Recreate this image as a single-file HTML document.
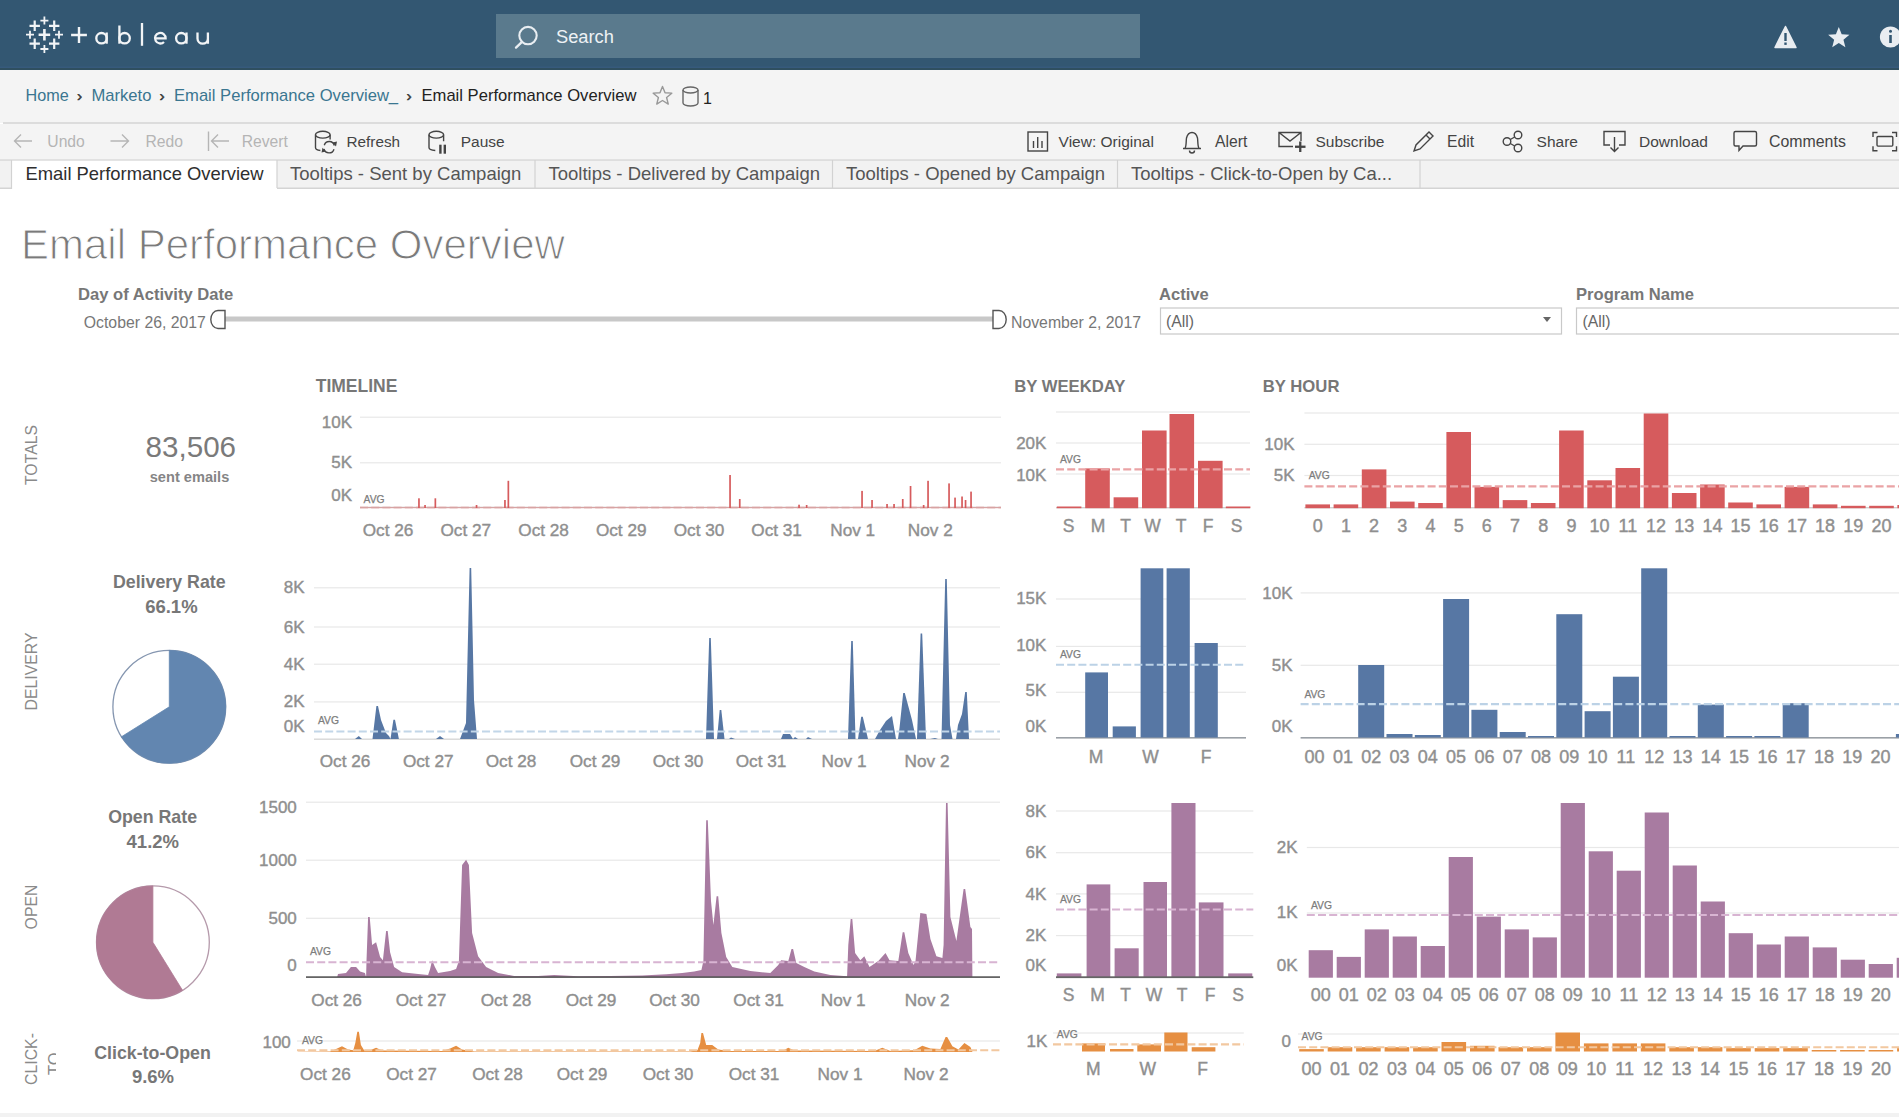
<!DOCTYPE html>
<html><head><meta charset="utf-8"><title>Email Performance Overview</title>
<style>
html,body{margin:0;padding:0;background:#fff;overflow:hidden;}
svg{display:block;font-family:"Liberation Sans", sans-serif;}
</style></head><body>
<svg width="1899" height="1117" viewBox="0 0 1899 1117">
<rect x="0" y="0" width="1899" height="1117" fill="#fff"/>
<rect x="0" y="0" width="1899" height="71" fill="#335772"/><rect x="0" y="66.5" width="1899" height="1.5" fill="#375a7c"/><rect x="0" y="68" width="1899" height="3" fill="#2f4f60"/>
<rect x="496" y="14" width="644" height="44" fill="#5a7a8d"/>
<circle cx="528" cy="35.6" r="8.7" fill="none" stroke="#e9eef2" stroke-width="2.1"/>
<line x1="522" y1="41.8" x2="516" y2="47.6" stroke="#e9eef2" stroke-width="2.3" stroke-linecap="round"/>
<text x="556.0" y="43.0" font-size="18.3" fill="#eef2f5" font-weight="400" text-anchor="start" >Search</text>
<path d="M38.6 34.7H50.2M44.4 28.9V40.5" stroke="#f2f4f6" stroke-width="2.6" fill="none"/>
<path d="M40.4 20.6H48.4M44.4 16.6V24.6" stroke="#f2f4f6" stroke-width="1.8" fill="none"/>
<path d="M26.0 34.7H34.0M30.0 30.7V38.7" stroke="#f2f4f6" stroke-width="1.8" fill="none"/>
<path d="M55.0 34.7H63.0M59.0 30.7V38.7" stroke="#f2f4f6" stroke-width="1.8" fill="none"/>
<path d="M40.4 49.0H48.4M44.4 45.0V53.0" stroke="#f2f4f6" stroke-width="1.8" fill="none"/>
<path d="M29.5 25.8H39.9M34.7 20.6V31.0" stroke="#f2f4f6" stroke-width="2.2" fill="none"/>
<path d="M49.0 25.8H59.4M54.2 20.6V31.0" stroke="#f2f4f6" stroke-width="2.2" fill="none"/>
<path d="M29.5 43.7H39.9M34.7 38.5V48.9" stroke="#f2f4f6" stroke-width="2.2" fill="none"/>
<path d="M49.0 43.7H59.4M54.2 38.5V48.9" stroke="#f2f4f6" stroke-width="2.2" fill="none"/>
<path d="M71.1 35.0H86.9M79.0 27.1V42.9" stroke="#f2f4f6" stroke-width="2.4" fill="none"/>
<g fill="none" stroke="#f2f4f6" stroke-width="2.3"><circle cx="101.5" cy="38.2" r="5.2"/><line x1="106.7" y1="32.5" x2="106.7" y2="43.7"/><circle cx="124.6" cy="38.2" r="5.2"/><line x1="119.4" y1="25.5" x2="119.4" y2="43.7"/><line x1="142" y1="23" x2="142" y2="45.8"/><path d="M155.2 38.4H165.6A5.3 5.3 0 1 0 164.0 42.0"/><circle cx="181.3" cy="38.2" r="5.2"/><line x1="186.5" y1="32.5" x2="186.5" y2="43.7"/><path d="M197.5 32.5V38.5A5.2 5.2 0 0 0 207.9 38.5V32.5M207.9 32.5V43.7"/></g>
<path d="M1785.5 26.5L1796 47.5H1775Z" fill="#e9edf1" stroke="#e9edf1" stroke-width="1.5" stroke-linejoin="round"/>
<rect x="1784.3" y="33" width="2.4" height="8" fill="#335772"/><rect x="1784.3" y="42.5" width="2.4" height="2.4" fill="#335772"/>
<polygon points="1838.80,27.00 1835.92,34.24 1828.15,34.74 1834.14,39.71 1832.22,47.26 1838.80,43.10 1845.38,47.26 1843.46,39.71 1849.45,34.74 1841.68,34.24" fill="#e9edf1"/>
<circle cx="1890.5" cy="37" r="10.6" fill="#e9edf1"/>
<rect x="1889.2" y="35" width="2.6" height="8" fill="#335772"/><circle cx="1890.5" cy="31.3" r="1.5" fill="#335772"/>
<rect x="0" y="70" width="1899" height="53" fill="#f4f4f4"/>
<text y="101" font-size="16.2" fill="#3a7690"><tspan x="25.5">Home</tspan><tspan x="91.5" font-size="16.6">Marketo</tspan><tspan x="174" font-size="16.6">Email Performance Overview_</tspan></text>
<text y="100.5" font-size="15.5" fill="#333" stroke="#333" stroke-width="0.5"><tspan x="77">›</tspan><tspan x="159.5">›</tspan><tspan x="406.5">›</tspan></text>
<text x="421.5" y="101.0" font-size="16.6" fill="#222" font-weight="400" text-anchor="start" >Email Performance Overview</text>
<polygon points="662.50,86.40 659.97,92.72 653.18,93.17 658.41,97.53 656.74,104.13 662.50,100.50 668.26,104.13 666.59,97.53 671.82,93.17 665.03,92.72" fill="none" stroke="#999" stroke-width="1.4" stroke-linejoin="round"/>
<g fill="none" stroke="#666" stroke-width="1.4"><ellipse cx="690.5" cy="90" rx="7.5" ry="3"/><path d="M683 90V103A7.5 3 0 0 0 698 103V90"/></g>
<text x="703.0" y="104.0" font-size="16" fill="#222" font-weight="400" text-anchor="start" >1</text>
<rect x="3" y="122" width="1896" height="2" fill="#dcdcdc"/>
<rect x="0" y="124" width="1899" height="36" fill="#f4f4f4"/>
<text x="47.3" y="146.6" font-size="15.7" fill="#b5b5b5" font-weight="400" text-anchor="start" >Undo</text>
<text x="145.4" y="146.6" font-size="15.7" fill="#b5b5b5" font-weight="400" text-anchor="start" >Redo</text>
<text x="241.7" y="146.6" font-size="15.7" fill="#b5b5b5" font-weight="400" text-anchor="start" >Revert</text>
<text x="346.5" y="146.6" font-size="15.3" fill="#444" font-weight="400" text-anchor="start" >Refresh</text>
<text x="460.7" y="146.6" font-size="15.5" fill="#444" font-weight="400" text-anchor="start" >Pause</text>
<text x="1058.6" y="146.6" font-size="15.5" fill="#444" font-weight="400" text-anchor="start" >View: Original</text>
<text x="1215.0" y="146.6" font-size="15.7" fill="#444" font-weight="400" text-anchor="start" >Alert</text>
<text x="1315.5" y="146.6" font-size="15.5" fill="#444" font-weight="400" text-anchor="start" >Subscribe</text>
<text x="1447.0" y="146.6" font-size="15.7" fill="#444" font-weight="400" text-anchor="start" >Edit</text>
<text x="1536.6" y="146.6" font-size="15.5" fill="#444" font-weight="400" text-anchor="start" >Share</text>
<text x="1639.0" y="146.6" font-size="15.5" fill="#444" font-weight="400" text-anchor="start" >Download</text>
<text x="1769.0" y="146.6" font-size="15.9" fill="#444" font-weight="400" text-anchor="start" >Comments</text>
<g fill="none" stroke="#b5b5b5" stroke-width="1.4"><path d="M32 141H14.5M21 134.5L14.5 141L21 147.5"/><path d="M110.5 141H128.5M122 134.5L128.5 141L122 147.5"/><path d="M208.5 131.5V151M229 141H211.5M218 134.5L211.5 141L218 147.5"/></g>
<g fill="none" stroke="#444" stroke-width="1.4"><ellipse cx="322.8" cy="134.7" rx="7.3" ry="3.4"/><path d="M315.5 134.7V147.5C315.5 149.3 317.5 150.3 320.4 150.5M330.1 134.7V139.6"/><path d="M324.3 145.2A5.2 5.2 0 0 1 334.3 145.5M334 149.2A5.2 5.2 0 0 1 324 149"/><ellipse cx="436.3" cy="134.7" rx="7.3" ry="3.4"/><path d="M429 134.7V147.5C429 149.3 431.5 150.3 435.3 150.5M443.6 134.7V141.2"/><rect x="1028" y="132" width="19.5" height="19" /><path d="M1033.5 141V148M1037.7 137V148M1042 141V148"/><path d="M1183 148.5H1201M1185 148.5C1186.5 146 1186 141 1186.5 138C1187.5 134 1190 132.5 1192 132.5C1194 132.5 1196.5 134 1197.5 138C1198 141 1197.5 146 1199 148.5M1189.5 150.5A2.5 2.5 0 0 0 1194.5 150.5"/><path d="M1301 141V132.5H1279V146.5H1293M1279 132.5L1290 141L1301 132.5"/><path d="M1414 151L1416 145L1429 132L1433 136L1420 149Z M1426 135L1430 139"/><circle cx="1507" cy="141.5" r="3.8"/><circle cx="1518" cy="135" r="3.8"/><circle cx="1518" cy="148" r="3.8"/><path d="M1510.3 139.5L1514.7 137M1510.3 143.5L1514.7 146"/><path d="M1610 145H1604V131.5H1625V145H1619M1614.5 137V151.5M1610.5 147.5L1614.5 151.5L1618.5 147.5"/><path d="M1735.5 131.5H1755A1.5 1.5 0 0 1 1756.5 133V144.5A1.5 1.5 0 0 1 1755 146H1743L1739 150.5V146H1735.5A1.5 1.5 0 0 1 1734 144.5V133A1.5 1.5 0 0 1 1735.5 131.5Z"/><path d="M1873 137V132.5H1877.5M1877.5 150.8H1873V146.3M1896.5 137V132.5H1892M1892 150.8H1896.5V146.3" /><rect x="1877" y="136.5" width="15.8" height="9.6" rx="1"/></g>
<rect x="1295" y="145.6" width="10.5" height="2.3" fill="#444"/><rect x="1299.1" y="141.5" width="2.3" height="10.5" fill="#444"/>
<rect x="439.2" y="144.7" width="2.4" height="9" fill="#444"/><rect x="443.6" y="144.7" width="2.4" height="9" fill="#444"/>
<path d="M332.5 142.5L336 146.5L337 141.5Z M326 151.5L322.5 147.8L321.5 152.5Z" fill="#444"/>
<rect x="0" y="160" width="1899" height="28" fill="#f2f2f2"/>
<rect x="0" y="159.3" width="1899" height="1.5" fill="#d9d9d9"/>
<rect x="0" y="187.5" width="1899" height="1.5" fill="#d4d4d4"/>
<rect x="11.5" y="160.8" width="265.5" height="28.2" fill="#ffffff"/>
<path d="M11.5 160V189M277 160V188M535 160V188M832.5 160V188M1117.5 160V188M1420 160V188" stroke="#d2d2d2" stroke-width="1.2"/>
<text x="25.5" y="179.6" font-size="18.4" fill="#2e2e2e" font-weight="400" text-anchor="start" >Email Performance Overview</text>
<text x="290.0" y="179.6" font-size="18.5" fill="#555" font-weight="400" text-anchor="start" >Tooltips - Sent by Campaign</text>
<text x="548.5" y="179.6" font-size="18.5" fill="#555" font-weight="400" text-anchor="start" >Tooltips - Delivered by Campaign</text>
<text x="846.0" y="179.6" font-size="18.5" fill="#555" font-weight="400" text-anchor="start" >Tooltips - Opened by Campaign</text>
<text x="1131.0" y="179.6" font-size="18.5" fill="#555" font-weight="400" text-anchor="start" >Tooltips - Click-to-Open by Ca...</text>
<text x="21.0" y="258.5" font-size="42" fill="#7a7a7a" font-weight="400" text-anchor="start" stroke="#fff" stroke-width="1.05">Email Performance Overview</text>
<text x="78.0" y="300.3" font-size="16.6" fill="#777" font-weight="700" text-anchor="start" >Day of Activity Date</text>
<text x="83.8" y="327.7" font-size="15.8" fill="#777" font-weight="400" text-anchor="start" >October 26, 2017</text>
<rect x="225" y="316.5" width="770" height="5" fill="#c8c8c8"/>
<path d="M225 310.5H218A7.2 9 0 0 0 218 328.5H225Z" fill="#fff" stroke="#555" stroke-width="1.4"/>
<path d="M993 310.5H999A7.2 9 0 0 1 999 328.5H993Z" fill="#fff" stroke="#555" stroke-width="1.4"/>
<text x="1011.0" y="327.7" font-size="15.8" fill="#777" font-weight="400" text-anchor="start" >November 2, 2017</text>
<text x="1159.0" y="300.3" font-size="16.6" fill="#777" font-weight="700" text-anchor="start" >Active</text>
<rect x="1160.5" y="308" width="401" height="26" fill="#fff" stroke="#c9c9c9" stroke-width="1.2"/>
<text x="1166.0" y="327.0" font-size="15.8" fill="#666" font-weight="400" text-anchor="start" >(All)</text>
<path d="M1543 317H1551L1547 322Z" fill="#666"/>
<text x="1576.0" y="300.3" font-size="16.6" fill="#777" font-weight="700" text-anchor="start" >Program Name</text>
<rect x="1576.5" y="308" width="340" height="26" fill="#fff" stroke="#c9c9c9" stroke-width="1.2"/>
<text x="1582.5" y="327.0" font-size="15.8" fill="#666" font-weight="400" text-anchor="start" >(All)</text>
<text x="315.7" y="392.0" font-size="17.5" fill="#777" font-weight="700" text-anchor="start" >TIMELINE</text>
<text x="1014.2" y="392.0" font-size="16.7" fill="#777" font-weight="700" text-anchor="start" >BY WEEKDAY</text>
<text x="1262.8" y="392.0" font-size="16.7" fill="#777" font-weight="700" text-anchor="start" >BY HOUR</text>
<text x="0" y="0" font-size="15.8" fill="#8a8a8a" text-anchor="middle" transform="translate(37.2 455.0) rotate(-90)">TOTALS</text>
<text x="0" y="0" font-size="15.8" fill="#8a8a8a" text-anchor="middle" transform="translate(37.2 671.5) rotate(-90)">DELIVERY</text>
<text x="0" y="0" font-size="15.8" fill="#8a8a8a" text-anchor="middle" transform="translate(37.2 907.0) rotate(-90)">OPEN</text>
<text x="0" y="0" font-size="15.8" fill="#8a8a8a" text-anchor="middle" transform="translate(37.2 1059.0) rotate(-90)">CLICK-</text>
<clipPath id="cto"><rect x="40" y="1040" width="16" height="50"/></clipPath>
<g clip-path="url(#cto)"><text x="0" y="0" font-size="16.5" fill="#888" transform="translate(60.3 1075) rotate(-90)">TO</text></g>
<text x="190.8" y="457.4" font-size="29.6" fill="#7a7a7a" font-weight="400" text-anchor="middle" >83,506</text>
<text x="189.5" y="482.4" font-size="14.6" fill="#858585" font-weight="700" text-anchor="middle" >sent emails</text>
<rect x="360.0" y="416.6" width="641.0" height="1.2" fill="#e8e8e8"/>
<rect x="360.0" y="462.2" width="641.0" height="1.2" fill="#e8e8e8"/>
<rect x="360" y="506.5" width="641" height="1.5" fill="#e0e0e0"/>
<text x="352.0" y="427.8" font-size="17" fill="#8f8f8f" font-weight="400" text-anchor="end" stroke="#8f8f8f" stroke-width="0.4">10K</text>
<text x="352.0" y="467.8" font-size="17" fill="#8f8f8f" font-weight="400" text-anchor="end" stroke="#8f8f8f" stroke-width="0.4">5K</text>
<text x="352.0" y="501.1" font-size="17" fill="#8f8f8f" font-weight="400" text-anchor="end" stroke="#8f8f8f" stroke-width="0.4">0K</text>
<line x1="360.0" y1="507.5" x2="1001.0" y2="507.5" stroke="#efc4c4" stroke-width="2.1" stroke-dasharray="8 3.2"/>
<text x="363.6" y="502.5" font-size="11" fill="#7d7d7d" font-weight="400" text-anchor="start" textLength="21" lengthAdjust="spacingAndGlyphs" stroke="#7d7d7d" stroke-width="0.25">AVG</text>
<rect x="360" y="507" width="641" height="1.2" fill="#d7a3a3"/>
<rect x="418.1" y="498.3" width="1.7" height="9.7" fill="#d65b5d"/>
<rect x="424.2" y="505.0" width="1.7" height="3.0" fill="#d65b5d"/>
<rect x="434.5" y="498.3" width="1.7" height="9.7" fill="#d65b5d"/>
<rect x="475.7" y="505.0" width="1.7" height="3.0" fill="#d65b5d"/>
<rect x="504.1" y="500.0" width="1.7" height="8.0" fill="#d65b5d"/>
<rect x="507.5" y="480.8" width="1.7" height="27.2" fill="#d65b5d"/>
<rect x="729.2" y="475.0" width="1.7" height="33.0" fill="#d65b5d"/>
<rect x="738.9" y="499.0" width="1.7" height="9.0" fill="#d65b5d"/>
<rect x="798.2" y="504.7" width="1.7" height="3.3" fill="#d65b5d"/>
<rect x="805.8" y="505.0" width="1.7" height="3.0" fill="#d65b5d"/>
<rect x="861.2" y="490.9" width="1.7" height="17.1" fill="#d65b5d"/>
<rect x="871.2" y="500.0" width="1.7" height="8.0" fill="#d65b5d"/>
<rect x="886.2" y="504.0" width="1.7" height="4.0" fill="#d65b5d"/>
<rect x="893.2" y="504.0" width="1.7" height="4.0" fill="#d65b5d"/>
<rect x="901.9" y="499.0" width="1.7" height="9.0" fill="#d65b5d"/>
<rect x="909.7" y="486.0" width="1.7" height="22.0" fill="#d65b5d"/>
<rect x="922.8" y="505.0" width="1.7" height="3.0" fill="#d65b5d"/>
<rect x="927.2" y="480.8" width="1.7" height="27.2" fill="#d65b5d"/>
<rect x="948.2" y="483.4" width="1.7" height="24.6" fill="#d65b5d"/>
<rect x="954.2" y="497.6" width="1.7" height="10.4" fill="#d65b5d"/>
<rect x="961.2" y="496.5" width="1.7" height="11.5" fill="#d65b5d"/>
<rect x="964.7" y="500.0" width="1.7" height="8.0" fill="#d65b5d"/>
<rect x="970.2" y="491.6" width="1.7" height="16.4" fill="#d65b5d"/>
<text x="388.0" y="536.2" font-size="17.2" fill="#8f8f8f" font-weight="400" text-anchor="middle" stroke="#8f8f8f" stroke-width="0.4">Oct 26</text>
<text x="465.8" y="536.2" font-size="17.2" fill="#8f8f8f" font-weight="400" text-anchor="middle" stroke="#8f8f8f" stroke-width="0.4">Oct 27</text>
<text x="543.6" y="536.2" font-size="17.2" fill="#8f8f8f" font-weight="400" text-anchor="middle" stroke="#8f8f8f" stroke-width="0.4">Oct 28</text>
<text x="621.2" y="536.2" font-size="17.2" fill="#8f8f8f" font-weight="400" text-anchor="middle" stroke="#8f8f8f" stroke-width="0.4">Oct 29</text>
<text x="699.0" y="536.2" font-size="17.2" fill="#8f8f8f" font-weight="400" text-anchor="middle" stroke="#8f8f8f" stroke-width="0.4">Oct 30</text>
<text x="776.6" y="536.2" font-size="17.2" fill="#8f8f8f" font-weight="400" text-anchor="middle" stroke="#8f8f8f" stroke-width="0.4">Oct 31</text>
<text x="852.7" y="536.2" font-size="17.2" fill="#8f8f8f" font-weight="400" text-anchor="middle" stroke="#8f8f8f" stroke-width="0.4">Nov 1</text>
<text x="930.3" y="536.2" font-size="17.2" fill="#8f8f8f" font-weight="400" text-anchor="middle" stroke="#8f8f8f" stroke-width="0.4">Nov 2</text>
<rect x="1056.0" y="411.4" width="194.0" height="1.2" fill="#e8e8e8"/>
<rect x="1056.0" y="442.4" width="194.0" height="1.2" fill="#e8e8e8"/>
<rect x="1056.0" y="473.4" width="194.0" height="1.2" fill="#e8e8e8"/>
<rect x="1056" y="507" width="194" height="1.4" fill="#d0d0d0"/>
<text x="1046.4" y="449.0" font-size="17" fill="#8f8f8f" font-weight="400" text-anchor="end" stroke="#8f8f8f" stroke-width="0.4">20K</text>
<text x="1046.4" y="480.7" font-size="17" fill="#8f8f8f" font-weight="400" text-anchor="end" stroke="#8f8f8f" stroke-width="0.4">10K</text>
<rect x="1056.8" y="506.5" width="24.6" height="1.7" fill="#d65b5d"/>
<rect x="1085.2" y="468.4" width="24.6" height="39.8" fill="#d65b5d"/>
<rect x="1113.6" y="497.3" width="24.6" height="10.9" fill="#d65b5d"/>
<rect x="1142.0" y="430.5" width="24.6" height="77.7" fill="#d65b5d"/>
<rect x="1169.5" y="414.0" width="24.6" height="94.2" fill="#d65b5d"/>
<rect x="1198.0" y="460.8" width="24.6" height="47.4" fill="#d65b5d"/>
<rect x="1225.8" y="506.5" width="24.6" height="1.7" fill="#d65b5d"/>
<line x1="1056.0" y1="469.4" x2="1250.0" y2="469.4" stroke="#eaa3a5" stroke-width="2.1" stroke-dasharray="8 3.2"/>
<text x="1060.0" y="462.5" font-size="11" fill="#7d7d7d" font-weight="400" text-anchor="start" textLength="21" lengthAdjust="spacingAndGlyphs" stroke="#7d7d7d" stroke-width="0.25">AVG</text>
<text x="1068.7" y="532.0" font-size="17.5" fill="#8f8f8f" font-weight="400" text-anchor="middle" stroke="#8f8f8f" stroke-width="0.4">S</text>
<text x="1098.0" y="532.0" font-size="17.5" fill="#8f8f8f" font-weight="400" text-anchor="middle" stroke="#8f8f8f" stroke-width="0.4">M</text>
<text x="1125.5" y="532.0" font-size="17.5" fill="#8f8f8f" font-weight="400" text-anchor="middle" stroke="#8f8f8f" stroke-width="0.4">T</text>
<text x="1152.5" y="532.0" font-size="17.5" fill="#8f8f8f" font-weight="400" text-anchor="middle" stroke="#8f8f8f" stroke-width="0.4">W</text>
<text x="1181.0" y="532.0" font-size="17.5" fill="#8f8f8f" font-weight="400" text-anchor="middle" stroke="#8f8f8f" stroke-width="0.4">T</text>
<text x="1208.0" y="532.0" font-size="17.5" fill="#8f8f8f" font-weight="400" text-anchor="middle" stroke="#8f8f8f" stroke-width="0.4">F</text>
<text x="1236.7" y="532.0" font-size="17.5" fill="#8f8f8f" font-weight="400" text-anchor="middle" stroke="#8f8f8f" stroke-width="0.4">S</text>
<rect x="1304.4" y="412.4" width="594.6" height="1.2" fill="#e8e8e8"/>
<rect x="1304.4" y="443.7" width="594.6" height="1.2" fill="#e8e8e8"/>
<rect x="1304.4" y="474.9" width="594.6" height="1.2" fill="#e8e8e8"/>
<rect x="1304.4" y="507" width="595" height="1.4" fill="#d0d0d0"/>
<text x="1294.5" y="450.1" font-size="17" fill="#8f8f8f" font-weight="400" text-anchor="end" stroke="#8f8f8f" stroke-width="0.4">10K</text>
<text x="1294.5" y="481.1" font-size="17" fill="#8f8f8f" font-weight="400" text-anchor="end" stroke="#8f8f8f" stroke-width="0.4">5K</text>
<rect x="1305.4" y="504.4" width="24.6" height="3.8" fill="#d65b5d"/>
<rect x="1333.6" y="504.4" width="24.6" height="3.8" fill="#d65b5d"/>
<rect x="1361.8" y="469.4" width="24.6" height="38.8" fill="#d65b5d"/>
<rect x="1390.0" y="501.6" width="24.6" height="6.6" fill="#d65b5d"/>
<rect x="1418.2" y="503.0" width="24.6" height="5.2" fill="#d65b5d"/>
<rect x="1446.4" y="432.0" width="24.6" height="76.2" fill="#d65b5d"/>
<rect x="1474.5" y="486.9" width="24.6" height="21.3" fill="#d65b5d"/>
<rect x="1502.7" y="500.1" width="24.6" height="8.1" fill="#d65b5d"/>
<rect x="1530.9" y="503.0" width="24.6" height="5.2" fill="#d65b5d"/>
<rect x="1559.1" y="430.5" width="24.6" height="77.7" fill="#d65b5d"/>
<rect x="1587.3" y="480.3" width="24.6" height="27.9" fill="#d65b5d"/>
<rect x="1615.5" y="468.0" width="24.6" height="40.2" fill="#d65b5d"/>
<rect x="1643.7" y="413.5" width="24.6" height="94.7" fill="#d65b5d"/>
<rect x="1671.9" y="493.0" width="24.6" height="15.2" fill="#d65b5d"/>
<rect x="1700.1" y="484.5" width="24.6" height="23.7" fill="#d65b5d"/>
<rect x="1728.2" y="502.5" width="24.6" height="5.7" fill="#d65b5d"/>
<rect x="1756.4" y="504.4" width="24.6" height="3.8" fill="#d65b5d"/>
<rect x="1784.6" y="486.9" width="24.6" height="21.3" fill="#d65b5d"/>
<rect x="1812.8" y="504.4" width="24.6" height="3.8" fill="#d65b5d"/>
<rect x="1841.0" y="505.8" width="24.6" height="2.4" fill="#d65b5d"/>
<rect x="1869.2" y="505.8" width="24.6" height="2.4" fill="#d65b5d"/>
<rect x="1897.4" y="505.0" width="24.6" height="3.2" fill="#d65b5d"/>
<line x1="1304.4" y1="486.4" x2="1899.0" y2="486.4" stroke="#eaa3a5" stroke-width="2.1" stroke-dasharray="8 3.2"/>
<text x="1308.7" y="479.0" font-size="11" fill="#7d7d7d" font-weight="400" text-anchor="start" textLength="21" lengthAdjust="spacingAndGlyphs" stroke="#7d7d7d" stroke-width="0.25">AVG</text>
<text x="1317.7" y="532.2" font-size="18" fill="#8f8f8f" font-weight="400" text-anchor="middle" stroke="#8f8f8f" stroke-width="0.4">0</text>
<text x="1345.9" y="532.2" font-size="18" fill="#8f8f8f" font-weight="400" text-anchor="middle" stroke="#8f8f8f" stroke-width="0.4">1</text>
<text x="1374.1" y="532.2" font-size="18" fill="#8f8f8f" font-weight="400" text-anchor="middle" stroke="#8f8f8f" stroke-width="0.4">2</text>
<text x="1402.3" y="532.2" font-size="18" fill="#8f8f8f" font-weight="400" text-anchor="middle" stroke="#8f8f8f" stroke-width="0.4">3</text>
<text x="1430.5" y="532.2" font-size="18" fill="#8f8f8f" font-weight="400" text-anchor="middle" stroke="#8f8f8f" stroke-width="0.4">4</text>
<text x="1458.7" y="532.2" font-size="18" fill="#8f8f8f" font-weight="400" text-anchor="middle" stroke="#8f8f8f" stroke-width="0.4">5</text>
<text x="1486.8" y="532.2" font-size="18" fill="#8f8f8f" font-weight="400" text-anchor="middle" stroke="#8f8f8f" stroke-width="0.4">6</text>
<text x="1515.0" y="532.2" font-size="18" fill="#8f8f8f" font-weight="400" text-anchor="middle" stroke="#8f8f8f" stroke-width="0.4">7</text>
<text x="1543.2" y="532.2" font-size="18" fill="#8f8f8f" font-weight="400" text-anchor="middle" stroke="#8f8f8f" stroke-width="0.4">8</text>
<text x="1571.4" y="532.2" font-size="18" fill="#8f8f8f" font-weight="400" text-anchor="middle" stroke="#8f8f8f" stroke-width="0.4">9</text>
<text x="1599.6" y="532.2" font-size="18" fill="#8f8f8f" font-weight="400" text-anchor="middle" stroke="#8f8f8f" stroke-width="0.4">10</text>
<text x="1627.8" y="532.2" font-size="18" fill="#8f8f8f" font-weight="400" text-anchor="middle" stroke="#8f8f8f" stroke-width="0.4">11</text>
<text x="1656.0" y="532.2" font-size="18" fill="#8f8f8f" font-weight="400" text-anchor="middle" stroke="#8f8f8f" stroke-width="0.4">12</text>
<text x="1684.2" y="532.2" font-size="18" fill="#8f8f8f" font-weight="400" text-anchor="middle" stroke="#8f8f8f" stroke-width="0.4">13</text>
<text x="1712.4" y="532.2" font-size="18" fill="#8f8f8f" font-weight="400" text-anchor="middle" stroke="#8f8f8f" stroke-width="0.4">14</text>
<text x="1740.5" y="532.2" font-size="18" fill="#8f8f8f" font-weight="400" text-anchor="middle" stroke="#8f8f8f" stroke-width="0.4">15</text>
<text x="1768.7" y="532.2" font-size="18" fill="#8f8f8f" font-weight="400" text-anchor="middle" stroke="#8f8f8f" stroke-width="0.4">16</text>
<text x="1796.9" y="532.2" font-size="18" fill="#8f8f8f" font-weight="400" text-anchor="middle" stroke="#8f8f8f" stroke-width="0.4">17</text>
<text x="1825.1" y="532.2" font-size="18" fill="#8f8f8f" font-weight="400" text-anchor="middle" stroke="#8f8f8f" stroke-width="0.4">18</text>
<text x="1853.3" y="532.2" font-size="18" fill="#8f8f8f" font-weight="400" text-anchor="middle" stroke="#8f8f8f" stroke-width="0.4">19</text>
<text x="1881.5" y="532.2" font-size="18" fill="#8f8f8f" font-weight="400" text-anchor="middle" stroke="#8f8f8f" stroke-width="0.4">20</text>
<text x="169.3" y="587.6" font-size="17.8" fill="#777" font-weight="700" text-anchor="middle" >Delivery Rate</text>
<text x="171.4" y="612.6" font-size="18.5" fill="#777" font-weight="700" text-anchor="middle" >66.1%</text>
<circle cx="169.3" cy="706.8" r="56.4" fill="#fff" stroke="#8596b0" stroke-width="1.3"/>
<path d="M169.3 706.8L169.30 650.40A56.4 56.4 0 1 1 121.49 736.72Z" fill="#6286b0" stroke="#6286b0" stroke-width="0.8"/>
<rect x="314.0" y="587.2" width="686.0" height="1.2" fill="#e8e8e8"/>
<rect x="314.0" y="626.4" width="686.0" height="1.2" fill="#e8e8e8"/>
<rect x="314.0" y="663.6" width="686.0" height="1.2" fill="#e8e8e8"/>
<rect x="314.0" y="701.3" width="686.0" height="1.2" fill="#e8e8e8"/>
<rect x="314" y="738.5" width="686" height="1.4" fill="#d8d8d8"/>
<text x="304.5" y="593.1" font-size="17" fill="#8f8f8f" font-weight="400" text-anchor="end" stroke="#8f8f8f" stroke-width="0.4">8K</text>
<text x="304.5" y="633.1" font-size="17" fill="#8f8f8f" font-weight="400" text-anchor="end" stroke="#8f8f8f" stroke-width="0.4">6K</text>
<text x="304.5" y="670.1" font-size="17" fill="#8f8f8f" font-weight="400" text-anchor="end" stroke="#8f8f8f" stroke-width="0.4">4K</text>
<text x="304.5" y="707.1" font-size="17" fill="#8f8f8f" font-weight="400" text-anchor="end" stroke="#8f8f8f" stroke-width="0.4">2K</text>
<text x="304.5" y="732.1" font-size="17" fill="#8f8f8f" font-weight="400" text-anchor="end" stroke="#8f8f8f" stroke-width="0.4">0K</text>
<path d="M355.0 739L355.0 739.0L358.8 736.0L362.0 739.0L362.0 739Z" fill="#5777a4"/>
<path d="M372.5 739L372.5 739.0L376.4 706.0L378.0 706.0L381.0 720.0L386.0 733.0L389.0 736.0L390.5 739.0L393.4 719.8L395.0 719.8L398.9 739.0L398.9 739Z" fill="#5777a4"/>
<path d="M436.0 739L436.0 739.0L440.0 736.0L444.0 739.0L444.0 739Z" fill="#5777a4"/>
<path d="M460.0 739L460.0 739.0L466.0 723.0L469.6 568.0L471.2 568.0L474.0 700.0L477.0 739.0L477.0 739Z" fill="#5777a4"/>
<path d="M706.0 739L706.0 739.0L709.2 638.0L710.8 638.0L714.0 739.0L714.0 739Z" fill="#5777a4"/>
<path d="M717.0 739L717.0 739.0L719.7 710.0L721.3 710.0L724.5 739.0L724.5 739Z" fill="#5777a4"/>
<path d="M729.0 739L729.0 739.0L731.0 737.5L735.0 739.0L735.0 739Z" fill="#5777a4"/>
<path d="M781.0 739L781.0 739.0L783.0 734.0L790.0 734.0L793.0 739.0L795.0 737.0L798.0 739.0L798.0 739Z" fill="#5777a4"/>
<path d="M806.0 739L806.0 739.0L808.0 737.0L812.0 739.0L812.0 739Z" fill="#5777a4"/>
<path d="M848.0 739L848.0 739.0L851.2 641.0L852.8 641.0L855.5 739.0L855.5 739Z" fill="#5777a4"/>
<path d="M858.0 739L858.0 739.0L861.2 716.7L862.8 716.7L868.0 739.0L868.0 739Z" fill="#5777a4"/>
<path d="M875.0 739L875.0 739.0L880.0 730.0L886.0 721.0L892.0 716.0L896.0 739.0L896.0 739Z" fill="#5777a4"/>
<path d="M898.0 739L898.0 739.0L899.5 728.0L903.2 693.0L904.8 693.0L912.0 720.0L916.0 739.0L916.0 739Z" fill="#5777a4"/>
<path d="M917.0 739L917.0 739.0L920.6 633.4L922.2 633.4L926.0 739.0L926.0 739Z" fill="#5777a4"/>
<path d="M930.0 739L930.0 739.0L935.0 738.0L938.0 739.0L938.0 739Z" fill="#5777a4"/>
<path d="M941.5 739L941.5 739.0L945.2 579.0L946.8 579.0L950.0 725.0L952.5 739.0L952.5 739Z" fill="#5777a4"/>
<path d="M956.0 739L956.0 739.0L958.0 725.0L962.0 714.0L965.2 692.0L966.8 692.0L969.0 739.0L969.0 739Z" fill="#5777a4"/>
<line x1="314.0" y1="731.5" x2="1000.0" y2="731.5" stroke="#c2d6e8" stroke-width="2.1" stroke-dasharray="8 3.2"/>
<text x="318.0" y="724.0" font-size="11" fill="#7d7d7d" font-weight="400" text-anchor="start" textLength="21" lengthAdjust="spacingAndGlyphs" stroke="#7d7d7d" stroke-width="0.25">AVG</text>
<text x="345.0" y="767.2" font-size="17.2" fill="#8f8f8f" font-weight="400" text-anchor="middle" stroke="#8f8f8f" stroke-width="0.4">Oct 26</text>
<text x="428.2" y="767.2" font-size="17.2" fill="#8f8f8f" font-weight="400" text-anchor="middle" stroke="#8f8f8f" stroke-width="0.4">Oct 27</text>
<text x="511.0" y="767.2" font-size="17.2" fill="#8f8f8f" font-weight="400" text-anchor="middle" stroke="#8f8f8f" stroke-width="0.4">Oct 28</text>
<text x="595.0" y="767.2" font-size="17.2" fill="#8f8f8f" font-weight="400" text-anchor="middle" stroke="#8f8f8f" stroke-width="0.4">Oct 29</text>
<text x="678.0" y="767.2" font-size="17.2" fill="#8f8f8f" font-weight="400" text-anchor="middle" stroke="#8f8f8f" stroke-width="0.4">Oct 30</text>
<text x="761.0" y="767.2" font-size="17.2" fill="#8f8f8f" font-weight="400" text-anchor="middle" stroke="#8f8f8f" stroke-width="0.4">Oct 31</text>
<text x="844.0" y="767.2" font-size="17.2" fill="#8f8f8f" font-weight="400" text-anchor="middle" stroke="#8f8f8f" stroke-width="0.4">Nov 1</text>
<text x="927.0" y="767.2" font-size="17.2" fill="#8f8f8f" font-weight="400" text-anchor="middle" stroke="#8f8f8f" stroke-width="0.4">Nov 2</text>
<rect x="1056.0" y="598.4" width="190.0" height="1.2" fill="#e8e8e8"/>
<rect x="1056.0" y="645.8" width="190.0" height="1.2" fill="#e8e8e8"/>
<rect x="1056.0" y="691.7" width="190.0" height="1.2" fill="#e8e8e8"/>
<rect x="1056" y="737" width="190" height="1.6" fill="#9aa0a6"/>
<text x="1046.4" y="604.1" font-size="17" fill="#8f8f8f" font-weight="400" text-anchor="end" stroke="#8f8f8f" stroke-width="0.4">15K</text>
<text x="1046.4" y="651.1" font-size="17" fill="#8f8f8f" font-weight="400" text-anchor="end" stroke="#8f8f8f" stroke-width="0.4">10K</text>
<text x="1046.4" y="696.1" font-size="17" fill="#8f8f8f" font-weight="400" text-anchor="end" stroke="#8f8f8f" stroke-width="0.4">5K</text>
<text x="1046.4" y="731.5" font-size="17" fill="#8f8f8f" font-weight="400" text-anchor="end" stroke="#8f8f8f" stroke-width="0.4">0K</text>
<rect x="1085.2" y="672.4" width="22.8" height="65.1" fill="#5777a4"/>
<rect x="1112.7" y="726.4" width="23.2" height="11.1" fill="#5777a4"/>
<rect x="1140.6" y="568.3" width="22.7" height="169.2" fill="#5777a4"/>
<rect x="1166.6" y="568.3" width="23.2" height="169.2" fill="#5777a4"/>
<rect x="1194.6" y="643.0" width="23.2" height="94.5" fill="#5777a4"/>
<line x1="1056.0" y1="664.8" x2="1246.0" y2="664.8" stroke="#bcd2e6" stroke-width="2.1" stroke-dasharray="8 3.2"/>
<text x="1060.0" y="658.4" font-size="11" fill="#7d7d7d" font-weight="400" text-anchor="start" textLength="21" lengthAdjust="spacingAndGlyphs" stroke="#7d7d7d" stroke-width="0.25">AVG</text>
<text x="1096.0" y="762.5" font-size="17.5" fill="#8f8f8f" font-weight="400" text-anchor="middle" stroke="#8f8f8f" stroke-width="0.4">M</text>
<text x="1150.6" y="762.5" font-size="17.5" fill="#8f8f8f" font-weight="400" text-anchor="middle" stroke="#8f8f8f" stroke-width="0.4">W</text>
<text x="1206.0" y="762.5" font-size="17.5" fill="#8f8f8f" font-weight="400" text-anchor="middle" stroke="#8f8f8f" stroke-width="0.4">F</text>
<rect x="1300.6" y="592.3" width="598.4" height="1.2" fill="#e8e8e8"/>
<rect x="1300.6" y="664.7" width="598.4" height="1.2" fill="#e8e8e8"/>
<rect x="1300.6" y="737" width="599" height="1.6" fill="#9aa0a6"/>
<text x="1292.6" y="599.0" font-size="17" fill="#8f8f8f" font-weight="400" text-anchor="end" stroke="#8f8f8f" stroke-width="0.4">10K</text>
<text x="1292.6" y="671.1" font-size="17" fill="#8f8f8f" font-weight="400" text-anchor="end" stroke="#8f8f8f" stroke-width="0.4">5K</text>
<text x="1292.6" y="731.5" font-size="17" fill="#8f8f8f" font-weight="400" text-anchor="end" stroke="#8f8f8f" stroke-width="0.4">0K</text>
<rect x="1358.2" y="665.0" width="26.0" height="72.5" fill="#5777a4"/>
<rect x="1386.5" y="734.0" width="26.0" height="3.5" fill="#5777a4"/>
<rect x="1414.8" y="735.0" width="26.0" height="2.5" fill="#5777a4"/>
<rect x="1443.1" y="599.0" width="26.0" height="138.5" fill="#5777a4"/>
<rect x="1471.4" y="709.8" width="26.0" height="27.7" fill="#5777a4"/>
<rect x="1499.7" y="732.0" width="26.0" height="5.5" fill="#5777a4"/>
<rect x="1528.0" y="736.0" width="26.0" height="1.5" fill="#5777a4"/>
<rect x="1556.3" y="614.2" width="26.0" height="123.3" fill="#5777a4"/>
<rect x="1584.6" y="711.2" width="26.0" height="26.3" fill="#5777a4"/>
<rect x="1612.9" y="676.7" width="26.0" height="60.8" fill="#5777a4"/>
<rect x="1641.2" y="568.3" width="26.0" height="169.2" fill="#5777a4"/>
<rect x="1669.5" y="736.0" width="26.0" height="1.5" fill="#5777a4"/>
<rect x="1697.8" y="704.6" width="26.0" height="32.9" fill="#5777a4"/>
<rect x="1726.1" y="736.0" width="26.0" height="1.5" fill="#5777a4"/>
<rect x="1754.4" y="736.0" width="26.0" height="1.5" fill="#5777a4"/>
<rect x="1782.7" y="703.2" width="26.0" height="34.3" fill="#5777a4"/>
<rect x="1895.9" y="734.0" width="26.0" height="3.5" fill="#5777a4"/>
<line x1="1300.6" y1="704.1" x2="1899.0" y2="704.1" stroke="#bcd2e6" stroke-width="2.1" stroke-dasharray="8 3.2"/>
<text x="1304.4" y="697.7" font-size="11" fill="#7d7d7d" font-weight="400" text-anchor="start" textLength="21" lengthAdjust="spacingAndGlyphs" stroke="#7d7d7d" stroke-width="0.25">AVG</text>
<text x="1314.6" y="762.7" font-size="18" fill="#8f8f8f" font-weight="400" text-anchor="middle" stroke="#8f8f8f" stroke-width="0.4">00</text>
<text x="1342.9" y="762.7" font-size="18" fill="#8f8f8f" font-weight="400" text-anchor="middle" stroke="#8f8f8f" stroke-width="0.4">01</text>
<text x="1371.2" y="762.7" font-size="18" fill="#8f8f8f" font-weight="400" text-anchor="middle" stroke="#8f8f8f" stroke-width="0.4">02</text>
<text x="1399.5" y="762.7" font-size="18" fill="#8f8f8f" font-weight="400" text-anchor="middle" stroke="#8f8f8f" stroke-width="0.4">03</text>
<text x="1427.8" y="762.7" font-size="18" fill="#8f8f8f" font-weight="400" text-anchor="middle" stroke="#8f8f8f" stroke-width="0.4">04</text>
<text x="1456.1" y="762.7" font-size="18" fill="#8f8f8f" font-weight="400" text-anchor="middle" stroke="#8f8f8f" stroke-width="0.4">05</text>
<text x="1484.4" y="762.7" font-size="18" fill="#8f8f8f" font-weight="400" text-anchor="middle" stroke="#8f8f8f" stroke-width="0.4">06</text>
<text x="1512.7" y="762.7" font-size="18" fill="#8f8f8f" font-weight="400" text-anchor="middle" stroke="#8f8f8f" stroke-width="0.4">07</text>
<text x="1541.0" y="762.7" font-size="18" fill="#8f8f8f" font-weight="400" text-anchor="middle" stroke="#8f8f8f" stroke-width="0.4">08</text>
<text x="1569.3" y="762.7" font-size="18" fill="#8f8f8f" font-weight="400" text-anchor="middle" stroke="#8f8f8f" stroke-width="0.4">09</text>
<text x="1597.6" y="762.7" font-size="18" fill="#8f8f8f" font-weight="400" text-anchor="middle" stroke="#8f8f8f" stroke-width="0.4">10</text>
<text x="1625.9" y="762.7" font-size="18" fill="#8f8f8f" font-weight="400" text-anchor="middle" stroke="#8f8f8f" stroke-width="0.4">11</text>
<text x="1654.2" y="762.7" font-size="18" fill="#8f8f8f" font-weight="400" text-anchor="middle" stroke="#8f8f8f" stroke-width="0.4">12</text>
<text x="1682.5" y="762.7" font-size="18" fill="#8f8f8f" font-weight="400" text-anchor="middle" stroke="#8f8f8f" stroke-width="0.4">13</text>
<text x="1710.8" y="762.7" font-size="18" fill="#8f8f8f" font-weight="400" text-anchor="middle" stroke="#8f8f8f" stroke-width="0.4">14</text>
<text x="1739.1" y="762.7" font-size="18" fill="#8f8f8f" font-weight="400" text-anchor="middle" stroke="#8f8f8f" stroke-width="0.4">15</text>
<text x="1767.4" y="762.7" font-size="18" fill="#8f8f8f" font-weight="400" text-anchor="middle" stroke="#8f8f8f" stroke-width="0.4">16</text>
<text x="1795.7" y="762.7" font-size="18" fill="#8f8f8f" font-weight="400" text-anchor="middle" stroke="#8f8f8f" stroke-width="0.4">17</text>
<text x="1824.0" y="762.7" font-size="18" fill="#8f8f8f" font-weight="400" text-anchor="middle" stroke="#8f8f8f" stroke-width="0.4">18</text>
<text x="1852.3" y="762.7" font-size="18" fill="#8f8f8f" font-weight="400" text-anchor="middle" stroke="#8f8f8f" stroke-width="0.4">19</text>
<text x="1880.6" y="762.7" font-size="18" fill="#8f8f8f" font-weight="400" text-anchor="middle" stroke="#8f8f8f" stroke-width="0.4">20</text>
<text x="152.6" y="823.1" font-size="17.8" fill="#777" font-weight="700" text-anchor="middle" >Open Rate</text>
<text x="152.8" y="847.9" font-size="18.5" fill="#777" font-weight="700" text-anchor="middle" >41.2%</text>
<circle cx="152.9" cy="942.3" r="56.4" fill="#fff" stroke="#b59aab" stroke-width="1.3"/>
<path d="M152.9 942.3L182.52 990.30A56.4 56.4 0 1 1 152.90 885.90Z" fill="#b07a94" stroke="#b07a94" stroke-width="0.8"/>
<rect x="306.0" y="801.6" width="694.0" height="1.2" fill="#e8e8e8"/>
<rect x="306.0" y="859.6" width="694.0" height="1.2" fill="#e8e8e8"/>
<rect x="306.0" y="917.7" width="694.0" height="1.2" fill="#e8e8e8"/>
<text x="296.8" y="813.1" font-size="17" fill="#8f8f8f" font-weight="400" text-anchor="end" stroke="#8f8f8f" stroke-width="0.4">1500</text>
<text x="296.8" y="866.1" font-size="17" fill="#8f8f8f" font-weight="400" text-anchor="end" stroke="#8f8f8f" stroke-width="0.4">1000</text>
<text x="296.8" y="924.4" font-size="17" fill="#8f8f8f" font-weight="400" text-anchor="end" stroke="#8f8f8f" stroke-width="0.4">500</text>
<text x="296.8" y="971.1" font-size="17" fill="#8f8f8f" font-weight="400" text-anchor="end" stroke="#8f8f8f" stroke-width="0.4">0</text>
<path d="M337.2 977.1L337.2 977.1L338.0 973.9L346.0 973.1L350.9 967.1L356.1 967.1L360.1 971.5L364.9 973.1L366.1 977.1L366.5 961.1L368.1 917.1L369.7 917.1L372.1 945.1L376.1 942.3L380.1 957.1L382.9 960.3L386.1 931.1L387.7 931.1L390.1 952.3L394.1 967.1L402.1 972.3L418.1 973.9L428.1 975.1L430.1 969.1L432.1 960.3L434.9 967.1L438.1 973.1L450.1 971.1L456.1 969.1L458.9 961.1L462.1 865.0L466.1 859.8L468.9 865.0L472.1 933.1L478.1 956.3L486.1 967.1L498.1 973.1L514.1 975.9L538.1 975.9L554.2 975.1L578.2 976.3L610.2 975.9L642.2 975.5L666.2 974.3L682.2 973.1L694.2 971.5L701.4 969.9L703.4 961.1L706.2 820.2L707.8 820.2L711.0 901.1L713.4 925.1L716.6 896.3L718.2 896.3L721.4 933.1L726.2 957.1L732.3 967.1L750.3 971.1L770.3 973.1L778.3 965.1L781.1 960.3L788.3 961.1L791.5 949.1L793.1 949.1L796.3 963.1L804.3 967.1L814.3 971.5L830.3 975.1L847.1 976.3L848.3 945.1L850.7 919.1L852.3 919.1L855.1 953.1L860.3 960.3L864.3 956.3L869.5 967.1L878.3 961.1L885.5 953.1L889.5 960.3L898.3 961.1L902.7 932.3L904.3 932.3L908.3 953.1L913.5 965.1L915.5 961.1L920.3 913.1L926.4 913.9L930.4 939.1L936.4 956.3L942.4 957.9L943.6 945.1L946.0 803.0L947.6 803.0L950.4 917.1L956.4 941.1L963.6 889.1L965.2 889.1L970.4 927.1L972.0 929.1L972.4 977.1L972.4 977.1Z" fill="#a87ba1"/>
<rect x="306" y="976.3" width="694" height="1.6" fill="#555"/>
<line x1="306.0" y1="962.3" x2="1000.0" y2="962.3" stroke="#d8b4d2" stroke-width="2.1" stroke-dasharray="8 3.2"/>
<text x="310.0" y="955.0" font-size="11" fill="#7d7d7d" font-weight="400" text-anchor="start" textLength="21" lengthAdjust="spacingAndGlyphs" stroke="#7d7d7d" stroke-width="0.25">AVG</text>
<text x="336.6" y="1006.1" font-size="17.2" fill="#8f8f8f" font-weight="400" text-anchor="middle" stroke="#8f8f8f" stroke-width="0.4">Oct 26</text>
<text x="421.0" y="1006.1" font-size="17.2" fill="#8f8f8f" font-weight="400" text-anchor="middle" stroke="#8f8f8f" stroke-width="0.4">Oct 27</text>
<text x="506.0" y="1006.1" font-size="17.2" fill="#8f8f8f" font-weight="400" text-anchor="middle" stroke="#8f8f8f" stroke-width="0.4">Oct 28</text>
<text x="591.0" y="1006.1" font-size="17.2" fill="#8f8f8f" font-weight="400" text-anchor="middle" stroke="#8f8f8f" stroke-width="0.4">Oct 29</text>
<text x="674.5" y="1006.1" font-size="17.2" fill="#8f8f8f" font-weight="400" text-anchor="middle" stroke="#8f8f8f" stroke-width="0.4">Oct 30</text>
<text x="758.6" y="1006.1" font-size="17.2" fill="#8f8f8f" font-weight="400" text-anchor="middle" stroke="#8f8f8f" stroke-width="0.4">Oct 31</text>
<text x="843.2" y="1006.1" font-size="17.2" fill="#8f8f8f" font-weight="400" text-anchor="middle" stroke="#8f8f8f" stroke-width="0.4">Nov 1</text>
<text x="927.2" y="1006.1" font-size="17.2" fill="#8f8f8f" font-weight="400" text-anchor="middle" stroke="#8f8f8f" stroke-width="0.4">Nov 2</text>
<rect x="1056.0" y="810.4" width="197.3" height="1.2" fill="#e8e8e8"/>
<rect x="1056.0" y="852.1" width="197.3" height="1.2" fill="#e8e8e8"/>
<rect x="1056.0" y="893.3" width="197.3" height="1.2" fill="#e8e8e8"/>
<rect x="1056.0" y="935.0" width="197.3" height="1.2" fill="#e8e8e8"/>
<text x="1046.4" y="817.1" font-size="17" fill="#8f8f8f" font-weight="400" text-anchor="end" stroke="#8f8f8f" stroke-width="0.4">8K</text>
<text x="1046.4" y="858.1" font-size="17" fill="#8f8f8f" font-weight="400" text-anchor="end" stroke="#8f8f8f" stroke-width="0.4">6K</text>
<text x="1046.4" y="900.1" font-size="17" fill="#8f8f8f" font-weight="400" text-anchor="end" stroke="#8f8f8f" stroke-width="0.4">4K</text>
<text x="1046.4" y="941.1" font-size="17" fill="#8f8f8f" font-weight="400" text-anchor="end" stroke="#8f8f8f" stroke-width="0.4">2K</text>
<text x="1046.4" y="971.1" font-size="17" fill="#8f8f8f" font-weight="400" text-anchor="end" stroke="#8f8f8f" stroke-width="0.4">0K</text>
<rect x="1056.8" y="973.4" width="24.6" height="4.1" fill="#a87ba1"/>
<rect x="1086.6" y="884.4" width="23.7" height="93.1" fill="#a87ba1"/>
<rect x="1114.6" y="948.3" width="24.1" height="29.2" fill="#a87ba1"/>
<rect x="1143.5" y="882.0" width="23.5" height="95.5" fill="#a87ba1"/>
<rect x="1171.4" y="803.0" width="24.1" height="174.5" fill="#a87ba1"/>
<rect x="1198.8" y="902.4" width="24.7" height="75.1" fill="#a87ba1"/>
<rect x="1228.2" y="973.4" width="24.1" height="4.1" fill="#a87ba1"/>
<rect x="1056" y="976.3" width="197.3" height="1.8" fill="#666"/>
<line x1="1056.0" y1="909.5" x2="1253.3" y2="909.5" stroke="#d8b4d2" stroke-width="2.1" stroke-dasharray="8 3.2"/>
<text x="1060.0" y="902.6" font-size="11" fill="#7d7d7d" font-weight="400" text-anchor="start" textLength="21" lengthAdjust="spacingAndGlyphs" stroke="#7d7d7d" stroke-width="0.25">AVG</text>
<text x="1068.6" y="1001.0" font-size="17.5" fill="#8f8f8f" font-weight="400" text-anchor="middle" stroke="#8f8f8f" stroke-width="0.4">S</text>
<text x="1097.5" y="1001.0" font-size="17.5" fill="#8f8f8f" font-weight="400" text-anchor="middle" stroke="#8f8f8f" stroke-width="0.4">M</text>
<text x="1125.5" y="1001.0" font-size="17.5" fill="#8f8f8f" font-weight="400" text-anchor="middle" stroke="#8f8f8f" stroke-width="0.4">T</text>
<text x="1153.9" y="1001.0" font-size="17.5" fill="#8f8f8f" font-weight="400" text-anchor="middle" stroke="#8f8f8f" stroke-width="0.4">W</text>
<text x="1182.0" y="1001.0" font-size="17.5" fill="#8f8f8f" font-weight="400" text-anchor="middle" stroke="#8f8f8f" stroke-width="0.4">T</text>
<text x="1210.0" y="1001.0" font-size="17.5" fill="#8f8f8f" font-weight="400" text-anchor="middle" stroke="#8f8f8f" stroke-width="0.4">F</text>
<text x="1238.0" y="1001.0" font-size="17.5" fill="#8f8f8f" font-weight="400" text-anchor="middle" stroke="#8f8f8f" stroke-width="0.4">S</text>
<rect x="1306.8" y="846.9" width="592.2" height="1.2" fill="#e8e8e8"/>
<rect x="1306.8" y="912.4" width="592.2" height="1.2" fill="#e8e8e8"/>
<text x="1297.5" y="852.6" font-size="17" fill="#8f8f8f" font-weight="400" text-anchor="end" stroke="#8f8f8f" stroke-width="0.4">2K</text>
<text x="1297.5" y="918.0" font-size="17" fill="#8f8f8f" font-weight="400" text-anchor="end" stroke="#8f8f8f" stroke-width="0.4">1K</text>
<text x="1297.5" y="971.1" font-size="17" fill="#8f8f8f" font-weight="400" text-anchor="end" stroke="#8f8f8f" stroke-width="0.4">0K</text>
<rect x="1308.7" y="950.2" width="24.2" height="27.5" fill="#a87ba1"/>
<rect x="1336.7" y="956.9" width="24.2" height="20.8" fill="#a87ba1"/>
<rect x="1364.7" y="929.4" width="24.2" height="48.3" fill="#a87ba1"/>
<rect x="1392.7" y="936.5" width="24.2" height="41.2" fill="#a87ba1"/>
<rect x="1420.7" y="946.0" width="24.2" height="31.7" fill="#a87ba1"/>
<rect x="1448.7" y="857.0" width="24.2" height="120.7" fill="#a87ba1"/>
<rect x="1476.7" y="916.6" width="24.2" height="61.1" fill="#a87ba1"/>
<rect x="1504.7" y="929.4" width="24.2" height="48.3" fill="#a87ba1"/>
<rect x="1532.7" y="937.4" width="24.2" height="40.3" fill="#a87ba1"/>
<rect x="1560.7" y="803.0" width="24.2" height="174.7" fill="#a87ba1"/>
<rect x="1588.7" y="851.3" width="24.2" height="126.4" fill="#a87ba1"/>
<rect x="1616.7" y="870.7" width="24.2" height="107.0" fill="#a87ba1"/>
<rect x="1644.7" y="812.5" width="24.2" height="165.2" fill="#a87ba1"/>
<rect x="1672.7" y="865.5" width="24.2" height="112.2" fill="#a87ba1"/>
<rect x="1700.7" y="901.5" width="24.2" height="76.2" fill="#a87ba1"/>
<rect x="1728.7" y="933.2" width="24.2" height="44.5" fill="#a87ba1"/>
<rect x="1756.7" y="944.5" width="24.2" height="33.2" fill="#a87ba1"/>
<rect x="1784.7" y="936.5" width="24.2" height="41.2" fill="#a87ba1"/>
<rect x="1812.7" y="947.4" width="24.2" height="30.3" fill="#a87ba1"/>
<rect x="1840.7" y="959.7" width="24.2" height="18.0" fill="#a87ba1"/>
<rect x="1868.7" y="964.0" width="24.2" height="13.7" fill="#a87ba1"/>
<rect x="1896.7" y="957.8" width="24.2" height="19.9" fill="#a87ba1"/>
<line x1="1306.8" y1="915.0" x2="1899.0" y2="915.0" stroke="#d8b4d2" stroke-width="2.1" stroke-dasharray="8 3.2"/>
<text x="1311.0" y="908.8" font-size="11" fill="#7d7d7d" font-weight="400" text-anchor="start" textLength="21" lengthAdjust="spacingAndGlyphs" stroke="#7d7d7d" stroke-width="0.25">AVG</text>
<text x="1320.8" y="1001.2" font-size="18" fill="#8f8f8f" font-weight="400" text-anchor="middle" stroke="#8f8f8f" stroke-width="0.4">00</text>
<text x="1348.8" y="1001.2" font-size="18" fill="#8f8f8f" font-weight="400" text-anchor="middle" stroke="#8f8f8f" stroke-width="0.4">01</text>
<text x="1376.8" y="1001.2" font-size="18" fill="#8f8f8f" font-weight="400" text-anchor="middle" stroke="#8f8f8f" stroke-width="0.4">02</text>
<text x="1404.8" y="1001.2" font-size="18" fill="#8f8f8f" font-weight="400" text-anchor="middle" stroke="#8f8f8f" stroke-width="0.4">03</text>
<text x="1432.8" y="1001.2" font-size="18" fill="#8f8f8f" font-weight="400" text-anchor="middle" stroke="#8f8f8f" stroke-width="0.4">04</text>
<text x="1460.8" y="1001.2" font-size="18" fill="#8f8f8f" font-weight="400" text-anchor="middle" stroke="#8f8f8f" stroke-width="0.4">05</text>
<text x="1488.8" y="1001.2" font-size="18" fill="#8f8f8f" font-weight="400" text-anchor="middle" stroke="#8f8f8f" stroke-width="0.4">06</text>
<text x="1516.8" y="1001.2" font-size="18" fill="#8f8f8f" font-weight="400" text-anchor="middle" stroke="#8f8f8f" stroke-width="0.4">07</text>
<text x="1544.8" y="1001.2" font-size="18" fill="#8f8f8f" font-weight="400" text-anchor="middle" stroke="#8f8f8f" stroke-width="0.4">08</text>
<text x="1572.8" y="1001.2" font-size="18" fill="#8f8f8f" font-weight="400" text-anchor="middle" stroke="#8f8f8f" stroke-width="0.4">09</text>
<text x="1600.8" y="1001.2" font-size="18" fill="#8f8f8f" font-weight="400" text-anchor="middle" stroke="#8f8f8f" stroke-width="0.4">10</text>
<text x="1628.8" y="1001.2" font-size="18" fill="#8f8f8f" font-weight="400" text-anchor="middle" stroke="#8f8f8f" stroke-width="0.4">11</text>
<text x="1656.8" y="1001.2" font-size="18" fill="#8f8f8f" font-weight="400" text-anchor="middle" stroke="#8f8f8f" stroke-width="0.4">12</text>
<text x="1684.8" y="1001.2" font-size="18" fill="#8f8f8f" font-weight="400" text-anchor="middle" stroke="#8f8f8f" stroke-width="0.4">13</text>
<text x="1712.8" y="1001.2" font-size="18" fill="#8f8f8f" font-weight="400" text-anchor="middle" stroke="#8f8f8f" stroke-width="0.4">14</text>
<text x="1740.8" y="1001.2" font-size="18" fill="#8f8f8f" font-weight="400" text-anchor="middle" stroke="#8f8f8f" stroke-width="0.4">15</text>
<text x="1768.8" y="1001.2" font-size="18" fill="#8f8f8f" font-weight="400" text-anchor="middle" stroke="#8f8f8f" stroke-width="0.4">16</text>
<text x="1796.8" y="1001.2" font-size="18" fill="#8f8f8f" font-weight="400" text-anchor="middle" stroke="#8f8f8f" stroke-width="0.4">17</text>
<text x="1824.8" y="1001.2" font-size="18" fill="#8f8f8f" font-weight="400" text-anchor="middle" stroke="#8f8f8f" stroke-width="0.4">18</text>
<text x="1852.8" y="1001.2" font-size="18" fill="#8f8f8f" font-weight="400" text-anchor="middle" stroke="#8f8f8f" stroke-width="0.4">19</text>
<text x="1880.8" y="1001.2" font-size="18" fill="#8f8f8f" font-weight="400" text-anchor="middle" stroke="#8f8f8f" stroke-width="0.4">20</text>
<text x="152.5" y="1059.0" font-size="17.8" fill="#777" font-weight="700" text-anchor="middle" >Click-to-Open</text>
<text x="153.0" y="1083.3" font-size="18.5" fill="#777" font-weight="700" text-anchor="middle" >9.6%</text>
<rect x="297.0" y="1040.4" width="703.0" height="1.2" fill="#e8e8e8"/>
<text x="290.8" y="1047.9" font-size="17" fill="#8f8f8f" font-weight="400" text-anchor="end" stroke="#8f8f8f" stroke-width="0.4">100</text>
<path d="M298.0 1052L298.0 1051.8L330.0 1051.4L336.0 1049.0L342.0 1046.2L348.1 1049.4L353.3 1050.2L355.3 1043.0L357.3 1031.8L358.9 1031.8L360.9 1045.0L364.1 1050.2L370.1 1050.2L376.1 1047.8L382.1 1050.6L442.1 1051.0L450.1 1048.6L456.1 1045.8L462.1 1049.4L474.1 1051.4L690.2 1051.4L697.4 1050.2L700.2 1043.0L701.4 1033.0L703.0 1033.0L706.2 1045.0L712.2 1045.0L718.2 1049.4L730.2 1051.0L782.3 1051.0L788.3 1047.8L794.3 1050.6L874.3 1051.0L882.3 1047.8L890.3 1051.0L914.3 1050.2L922.3 1045.8L930.4 1048.6L940.4 1049.0L945.6 1037.0L947.2 1037.0L952.4 1046.2L958.4 1049.4L964.4 1043.0L970.4 1047.0L972.4 1051.8L972.4 1052Z" fill="#e68f42"/>
<line x1="297.0" y1="1050.2" x2="1000.0" y2="1050.2" stroke="#f2c8a0" stroke-width="2.1" stroke-dasharray="8 3.2"/>
<text x="302.0" y="1043.8" font-size="11" fill="#7d7d7d" font-weight="400" text-anchor="start" textLength="21" lengthAdjust="spacingAndGlyphs" stroke="#7d7d7d" stroke-width="0.25">AVG</text>
<text x="325.4" y="1080.0" font-size="17.2" fill="#8f8f8f" font-weight="400" text-anchor="middle" stroke="#8f8f8f" stroke-width="0.4">Oct 26</text>
<text x="411.5" y="1080.0" font-size="17.2" fill="#8f8f8f" font-weight="400" text-anchor="middle" stroke="#8f8f8f" stroke-width="0.4">Oct 27</text>
<text x="497.5" y="1080.0" font-size="17.2" fill="#8f8f8f" font-weight="400" text-anchor="middle" stroke="#8f8f8f" stroke-width="0.4">Oct 28</text>
<text x="582.0" y="1080.0" font-size="17.2" fill="#8f8f8f" font-weight="400" text-anchor="middle" stroke="#8f8f8f" stroke-width="0.4">Oct 29</text>
<text x="668.0" y="1080.0" font-size="17.2" fill="#8f8f8f" font-weight="400" text-anchor="middle" stroke="#8f8f8f" stroke-width="0.4">Oct 30</text>
<text x="754.0" y="1080.0" font-size="17.2" fill="#8f8f8f" font-weight="400" text-anchor="middle" stroke="#8f8f8f" stroke-width="0.4">Oct 31</text>
<text x="840.0" y="1080.0" font-size="17.2" fill="#8f8f8f" font-weight="400" text-anchor="middle" stroke="#8f8f8f" stroke-width="0.4">Nov 1</text>
<text x="926.0" y="1080.0" font-size="17.2" fill="#8f8f8f" font-weight="400" text-anchor="middle" stroke="#8f8f8f" stroke-width="0.4">Nov 2</text>
<rect x="1053.0" y="1032.4" width="190.8" height="1.2" fill="#e8e8e8"/>
<text x="1047.3" y="1047.1" font-size="17" fill="#8f8f8f" font-weight="400" text-anchor="end" stroke="#8f8f8f" stroke-width="0.4">1K</text>
<rect x="1082.0" y="1043.4" width="23.0" height="8.1" fill="#e68f42"/>
<rect x="1110.0" y="1049.0" width="23.5" height="2.5" fill="#e68f42"/>
<rect x="1137.3" y="1044.4" width="23.7" height="7.1" fill="#e68f42"/>
<rect x="1164.3" y="1032.5" width="23.2" height="19.0" fill="#e68f42"/>
<rect x="1191.7" y="1047.2" width="23.7" height="4.3" fill="#e68f42"/>
<line x1="1053.0" y1="1044.4" x2="1243.8" y2="1044.4" stroke="#f2c8a0" stroke-width="2.1" stroke-dasharray="8 3.2"/>
<text x="1056.8" y="1038.0" font-size="11" fill="#7d7d7d" font-weight="400" text-anchor="start" textLength="21" lengthAdjust="spacingAndGlyphs" stroke="#7d7d7d" stroke-width="0.25">AVG</text>
<text x="1093.3" y="1074.8" font-size="17.5" fill="#8f8f8f" font-weight="400" text-anchor="middle" stroke="#8f8f8f" stroke-width="0.4">M</text>
<text x="1147.7" y="1074.8" font-size="17.5" fill="#8f8f8f" font-weight="400" text-anchor="middle" stroke="#8f8f8f" stroke-width="0.4">W</text>
<text x="1202.6" y="1074.8" font-size="17.5" fill="#8f8f8f" font-weight="400" text-anchor="middle" stroke="#8f8f8f" stroke-width="0.4">F</text>
<rect x="1298.0" y="1033.4" width="601.0" height="1.2" fill="#e8e8e8"/>
<text x="1291.0" y="1047.1" font-size="17" fill="#8f8f8f" font-weight="400" text-anchor="end" stroke="#8f8f8f" stroke-width="0.4">0</text>
<rect x="1299.2" y="1049.1" width="24.6" height="2.4" fill="#e68f42"/>
<rect x="1327.7" y="1047.2" width="24.6" height="4.3" fill="#e68f42"/>
<rect x="1356.1" y="1047.2" width="24.6" height="4.3" fill="#e68f42"/>
<rect x="1384.6" y="1047.2" width="24.6" height="4.3" fill="#e68f42"/>
<rect x="1413.1" y="1047.2" width="24.6" height="4.3" fill="#e68f42"/>
<rect x="1441.5" y="1042.0" width="24.6" height="9.5" fill="#e68f42"/>
<rect x="1470.0" y="1045.8" width="24.6" height="5.7" fill="#e68f42"/>
<rect x="1498.5" y="1047.2" width="24.6" height="4.3" fill="#e68f42"/>
<rect x="1527.0" y="1047.2" width="24.6" height="4.3" fill="#e68f42"/>
<rect x="1555.4" y="1032.5" width="24.6" height="19.0" fill="#e68f42"/>
<rect x="1583.9" y="1043.4" width="24.6" height="8.1" fill="#e68f42"/>
<rect x="1612.4" y="1043.4" width="24.6" height="8.1" fill="#e68f42"/>
<rect x="1640.8" y="1043.4" width="24.6" height="8.1" fill="#e68f42"/>
<rect x="1669.3" y="1047.2" width="24.6" height="4.3" fill="#e68f42"/>
<rect x="1697.8" y="1047.2" width="24.6" height="4.3" fill="#e68f42"/>
<rect x="1726.2" y="1048.1" width="24.6" height="3.4" fill="#e68f42"/>
<rect x="1754.7" y="1048.1" width="24.6" height="3.4" fill="#e68f42"/>
<rect x="1783.2" y="1048.1" width="24.6" height="3.4" fill="#e68f42"/>
<rect x="1811.7" y="1050.0" width="24.6" height="1.5" fill="#e68f42"/>
<rect x="1840.1" y="1050.0" width="24.6" height="1.5" fill="#e68f42"/>
<rect x="1868.6" y="1050.0" width="24.6" height="1.5" fill="#e68f42"/>
<rect x="1897.1" y="1048.1" width="24.6" height="3.4" fill="#e68f42"/>
<line x1="1298.0" y1="1047.2" x2="1899.0" y2="1047.2" stroke="#f2c8a0" stroke-width="2.1" stroke-dasharray="8 3.2"/>
<text x="1301.6" y="1040.3" font-size="11" fill="#7d7d7d" font-weight="400" text-anchor="start" textLength="21" lengthAdjust="spacingAndGlyphs" stroke="#7d7d7d" stroke-width="0.25">AVG</text>
<text x="1311.5" y="1075.0" font-size="18" fill="#8f8f8f" font-weight="400" text-anchor="middle" stroke="#8f8f8f" stroke-width="0.4">00</text>
<text x="1340.0" y="1075.0" font-size="18" fill="#8f8f8f" font-weight="400" text-anchor="middle" stroke="#8f8f8f" stroke-width="0.4">01</text>
<text x="1368.4" y="1075.0" font-size="18" fill="#8f8f8f" font-weight="400" text-anchor="middle" stroke="#8f8f8f" stroke-width="0.4">02</text>
<text x="1396.9" y="1075.0" font-size="18" fill="#8f8f8f" font-weight="400" text-anchor="middle" stroke="#8f8f8f" stroke-width="0.4">03</text>
<text x="1425.4" y="1075.0" font-size="18" fill="#8f8f8f" font-weight="400" text-anchor="middle" stroke="#8f8f8f" stroke-width="0.4">04</text>
<text x="1453.8" y="1075.0" font-size="18" fill="#8f8f8f" font-weight="400" text-anchor="middle" stroke="#8f8f8f" stroke-width="0.4">05</text>
<text x="1482.3" y="1075.0" font-size="18" fill="#8f8f8f" font-weight="400" text-anchor="middle" stroke="#8f8f8f" stroke-width="0.4">06</text>
<text x="1510.8" y="1075.0" font-size="18" fill="#8f8f8f" font-weight="400" text-anchor="middle" stroke="#8f8f8f" stroke-width="0.4">07</text>
<text x="1539.3" y="1075.0" font-size="18" fill="#8f8f8f" font-weight="400" text-anchor="middle" stroke="#8f8f8f" stroke-width="0.4">08</text>
<text x="1567.7" y="1075.0" font-size="18" fill="#8f8f8f" font-weight="400" text-anchor="middle" stroke="#8f8f8f" stroke-width="0.4">09</text>
<text x="1596.2" y="1075.0" font-size="18" fill="#8f8f8f" font-weight="400" text-anchor="middle" stroke="#8f8f8f" stroke-width="0.4">10</text>
<text x="1624.7" y="1075.0" font-size="18" fill="#8f8f8f" font-weight="400" text-anchor="middle" stroke="#8f8f8f" stroke-width="0.4">11</text>
<text x="1653.1" y="1075.0" font-size="18" fill="#8f8f8f" font-weight="400" text-anchor="middle" stroke="#8f8f8f" stroke-width="0.4">12</text>
<text x="1681.6" y="1075.0" font-size="18" fill="#8f8f8f" font-weight="400" text-anchor="middle" stroke="#8f8f8f" stroke-width="0.4">13</text>
<text x="1710.1" y="1075.0" font-size="18" fill="#8f8f8f" font-weight="400" text-anchor="middle" stroke="#8f8f8f" stroke-width="0.4">14</text>
<text x="1738.5" y="1075.0" font-size="18" fill="#8f8f8f" font-weight="400" text-anchor="middle" stroke="#8f8f8f" stroke-width="0.4">15</text>
<text x="1767.0" y="1075.0" font-size="18" fill="#8f8f8f" font-weight="400" text-anchor="middle" stroke="#8f8f8f" stroke-width="0.4">16</text>
<text x="1795.5" y="1075.0" font-size="18" fill="#8f8f8f" font-weight="400" text-anchor="middle" stroke="#8f8f8f" stroke-width="0.4">17</text>
<text x="1824.0" y="1075.0" font-size="18" fill="#8f8f8f" font-weight="400" text-anchor="middle" stroke="#8f8f8f" stroke-width="0.4">18</text>
<text x="1852.4" y="1075.0" font-size="18" fill="#8f8f8f" font-weight="400" text-anchor="middle" stroke="#8f8f8f" stroke-width="0.4">19</text>
<text x="1880.9" y="1075.0" font-size="18" fill="#8f8f8f" font-weight="400" text-anchor="middle" stroke="#8f8f8f" stroke-width="0.4">20</text>
<rect x="0" y="1113" width="1899" height="4" fill="#f2f2f2"/>
</svg></body></html>
